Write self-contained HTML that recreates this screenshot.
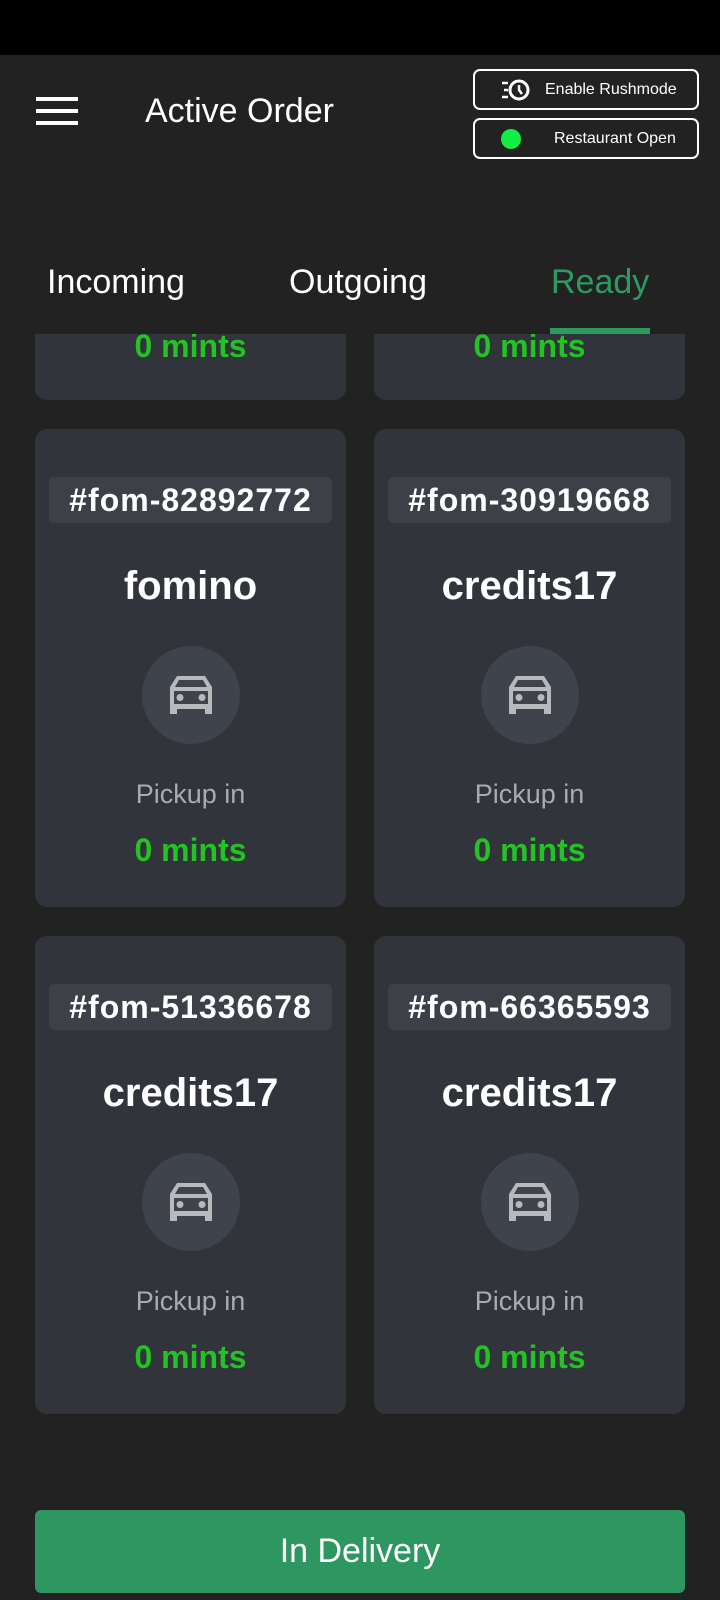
<!DOCTYPE html>
<html><head><meta charset="utf-8"><style>
*{margin:0;padding:0;box-sizing:border-box}
body{width:720px;height:1600px;background:#222222;font-family:"Liberation Sans",sans-serif;position:relative;overflow:hidden;color:#fff}
.abs{position:absolute}
.btn{position:absolute;left:473px;width:226px;height:41px;border:2px solid #fff;border-radius:7px;font-size:16px;display:flex;align-items:center}
.card{position:absolute;width:311px;background:#31343b;border-radius:12px}
.c{position:absolute;left:0;right:0;text-align:center}
.tag{position:absolute;left:14px;right:14px;top:48px;height:46px;background:#3d4047;border-radius:5px;font-weight:bold;font-size:32px;letter-spacing:1px;text-align:center;line-height:46px}
.name{top:135px;font-weight:bold;font-size:40px}
.circ{position:absolute;left:107px;top:217px;width:98px;height:98px;border-radius:50%;background:#3f434b}
.circ svg{position:absolute;left:28px;top:30px}
.pk{top:350px;font-size:27px;color:#a8abb2}
.mi{top:403px;font-size:32px;font-weight:bold;color:#22c322}
</style></head><body>
<div class="abs" style="left:0;top:0;width:720px;height:55px;background:#000"></div>
<div class="abs" style="left:36px;top:97px;width:42px;height:4px;background:#fff"></div>
<div class="abs" style="left:36px;top:109px;width:42px;height:4px;background:#fff"></div>
<div class="abs" style="left:36px;top:121px;width:42px;height:4px;background:#fff"></div>
<div class="abs" style="left:145px;top:92px;font-size:34px">Active Order</div>
<div class="btn" style="top:69px"><svg style="margin-left:24px" width="34" height="26" viewBox="0 0 34 26"><circle cx="20" cy="13" r="9" fill="none" stroke="#fff" stroke-width="3"/><path d="M20 8v5l3 4" fill="none" stroke="#fff" stroke-width="2.5"/><path d="M3 6h6M5 13h4M3 20h6" stroke="#fff" stroke-width="2.5"/></svg><span style="margin-left:12px">Enable Rushmode</span></div>
<div class="btn" style="top:118px"><span style="margin-left:26px;width:20px;height:20px;border-radius:50%;background:#11ee44;display:inline-block"></span><span style="margin-left:33px">Restaurant Open</span></div>
<div class="abs" style="left:47px;top:263px;font-size:34px">Incoming</div>
<div class="abs" style="left:289px;top:263px;font-size:34px">Outgoing</div>
<div class="abs" style="left:551px;top:263px;font-size:34px;color:#2e9a62">Ready</div>
<div class="card" style="left:35px;top:300px;height:100px"><div class="c mi" style="top:28px">0 mints</div></div>
<div class="card" style="left:374px;top:300px;height:100px"><div class="c mi" style="top:28px">0 mints</div></div>
<div class="abs" style="left:0;top:300px;width:720px;height:34px;background:#222"></div>
<div class="abs" style="left:550px;top:328px;width:100px;height:6px;background:#2e9a62"></div>

<svg width="0" height="0" style="position:absolute"><defs><g id="car"><path fill-rule="evenodd" fill="#b8b9bd" d="M7 0H35L42 11V38H35V33H7V38H0V11Z M9 4H33L37 11H5Z M4 15H38V28H4Z"/><circle cx="10" cy="21.5" r="3.5" fill="#b8b9bd"/><circle cx="32" cy="21.5" r="3.5" fill="#b8b9bd"/></g></defs></svg>

<div class="card" style="left:35px;top:429px;height:478px"><div class="tag">#fom-82892772</div><div class="c name">fomino</div><div class="circ"><svg width="42" height="38" viewBox="0 0 42 38"><use href="#car"/></svg></div><div class="c pk">Pickup in</div><div class="c mi">0 mints</div></div>
<div class="card" style="left:374px;top:429px;height:478px"><div class="tag">#fom-30919668</div><div class="c name">credits17</div><div class="circ"><svg width="42" height="38" viewBox="0 0 42 38"><use href="#car"/></svg></div><div class="c pk">Pickup in</div><div class="c mi">0 mints</div></div>
<div class="card" style="left:35px;top:936px;height:478px"><div class="tag">#fom-51336678</div><div class="c name">credits17</div><div class="circ"><svg width="42" height="38" viewBox="0 0 42 38"><use href="#car"/></svg></div><div class="c pk">Pickup in</div><div class="c mi">0 mints</div></div>
<div class="card" style="left:374px;top:936px;height:478px"><div class="tag">#fom-66365593</div><div class="c name">credits17</div><div class="circ"><svg width="42" height="38" viewBox="0 0 42 38"><use href="#car"/></svg></div><div class="c pk">Pickup in</div><div class="c mi">0 mints</div></div>

<div class="abs" style="left:35px;top:1510px;width:650px;height:83px;background:#2e9660;border-radius:6px;text-align:center;line-height:83px;font-size:34px">In Delivery</div>
</body></html>
